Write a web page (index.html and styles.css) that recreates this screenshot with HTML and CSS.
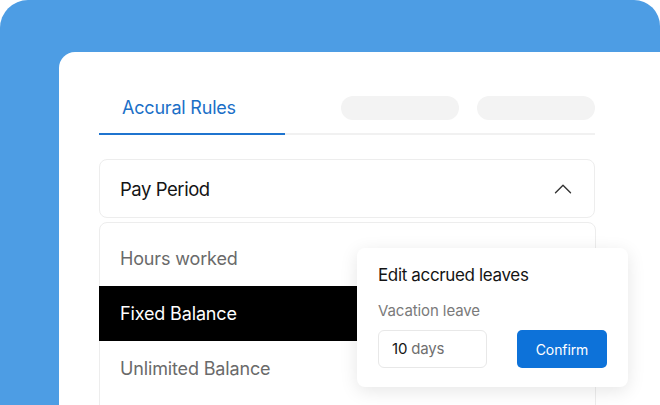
FILE: index.html
```html
<!DOCTYPE html>
<html>
<head>
<meta charset="utf-8">
<link rel="stylesheet" href="styles.css">
</head>
<body>
<div class="frame">
  <div class="card">
    <div class="tabs">
      <div class="tab active">Accural Rules</div>
      <div class="pill pill-first"></div>
      <div class="pill"></div>
    </div>
    <div class="select">
      <span class="select-label">Pay Period</span>
      <svg class="chevron" width="18" height="10" viewBox="0 0 18 10"><path d="M1.5 8.8 L9 1.3 L16.5 8.8" fill="none" stroke="#333333" stroke-width="1.4" stroke-linecap="round" stroke-linejoin="round"/></svg>
    </div>
    <div class="list-wrap">
      <ul class="list">
        <li class="item">Hours worked</li>
        <li class="item selected">Fixed Balance</li>
        <li class="item">Unlimited Balance</li>
      </ul>
      <div class="popup">
        <div class="popup-title">Edit accrued leaves</div>
        <div class="popup-label">Vacation leave</div>
        <div class="popup-row">
          <div class="input"><span class="num">10</span> <span class="unit">days</span></div>
          <button class="btn">Confirm</button>
        </div>
      </div>
    </div>
  </div>
</div>
</body>
</html>
```

FILE: styles.css
```css
* { box-sizing: border-box; }
html, body { margin: 0; padding: 0; background: #ffffff; }
body {
  width: 660px;
  height: 405px;
  overflow: hidden;
  font-family: "Inter", "Liberation Sans", sans-serif;
}
.frame {
  width: 660px;
  height: 405px;
  background: #4d9de4;
  border-radius: 28px 26px 0 0;
  padding: 52px 0 0 59px;
}
.card {
  height: 100%;
  background: #ffffff;
  border-top-left-radius: 16px;
  padding: 44px 65px 0 40px;
}
.tabs {
  display: flex;
  align-items: flex-start;
  padding-bottom: 13px;
  border-bottom: 2px solid #f1f1f1;
}
.tab {
  box-sizing: content-box;
  width: 163px;
  height: 24px;
  line-height: 24px;
  padding: 0 0 13px 23px;
  margin-bottom: -15px;
  border-bottom: 2px solid #1f74cf;
  font-size: 18px;
  color: #1a6fc7;
  letter-spacing: -0.2px;
}
.pill {
  width: 118px;
  height: 24px;
  border-radius: 12px;
  background: #f3f3f3;
  margin-left: 18px;
}
.pill-first { margin-left: 56px; }
.select {
  margin-top: 24px;
  height: 59px;
  border: 1px solid #ededed;
  border-radius: 8px;
  display: flex;
  align-items: center;
  justify-content: space-between;
  padding: 0 22px 0 20px;
}
.select-label {
  font-size: 18.5px;
  color: #141414;
  letter-spacing: -0.45px;
}
.chevron { display: block; margin-top: 1px; }
.list-wrap {
  position: relative;
  margin-top: 4px;
}
.list {
  list-style: none;
  margin: 0;
  padding: 8px 0 0;
  width: 497px;
  height: 200px;
  border: 1px solid #ededed;
  border-radius: 8px;
}
.item {
  height: 55px;
  line-height: 55px;
  padding-left: 20px;
  font-size: 18px;
  color: #6a6a6a;
  letter-spacing: -0.15px;
}
.item.selected {
  background: #000000;
  color: #ffffff;
  margin: 0 -1px;
  padding-left: 21px;
}
.popup {
  position: absolute;
  left: 258px;
  top: 26px;
  width: 271px;
  height: 139px;
  background: #ffffff;
  border-radius: 8px;
  box-shadow: 0 4px 18px rgba(0, 0, 0, 0.10);
  padding: 17px 21px 0;
}
.popup-title {
  font-size: 17px;
  line-height: 20px;
  color: #141414;
  letter-spacing: -0.35px;
}
.popup-label {
  margin-top: 17px;
  font-size: 15px;
  line-height: 18px;
  color: #7a7a7a;
  letter-spacing: -0.1px;
}
.popup-row {
  margin-top: 10px;
  display: flex;
  justify-content: space-between;
}
.input {
  width: 109px;
  height: 38px;
  border: 1px solid #e8e8e8;
  border-radius: 6px;
  padding-left: 13px;
  font-size: 15px;
  line-height: 36px;
  letter-spacing: -0.2px;
}
.num { color: #141414; }
.unit { color: #6f6f6f; }
.btn {
  width: 90px;
  height: 38px;
  border: none;
  border-radius: 5px;
  background: #0d72d9;
  color: #ffffff;
  font-family: inherit;
  font-size: 14px;
  letter-spacing: -0.1px;
  padding: 0;
}
```
